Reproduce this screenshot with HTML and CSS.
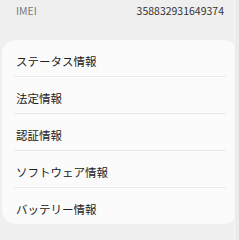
FILE: index.html
```html
<!DOCTYPE html>
<html lang="ja">
<head>
  <meta charset="UTF-8">
  <meta name="viewport" content="width=device-width, initial-scale=1.0">
  <title>端末情報</title>
  <link rel="stylesheet" href="styles.css">
</head>
<body>
  <div class="screen">
    <div class="info-row">
      <span class="info-label">IMEI</span>
      <span class="info-value">358832931649374</span>
    </div>

    <ul class="menu-card">
      <li>ステータス情報</li>
      <li>法定情報</li>
      <li>認証情報</li>
      <li>ソフトウェア情報</li>
      <li>バッテリー情報</li>
    </ul>
  </div>
  <div class="edge"></div>
</body>
</html>
```

FILE: styles.css
```css
:root {
  --page-bg: #efefef;
  --card-bg: #fbfbfb;
  --text-color: #222;
  --muted-color: #7a7a7a;
  --divider: #e9e9e9;
}

html, body {
  margin: 0;
  padding: 0;
  height: 100%;
}

body {
  background-color: var(--page-bg);
  font-family: "Noto Sans CJK JP", "Noto Sans", sans-serif;
  color: var(--text-color);
  position: relative;
  overflow: hidden;
}

.screen {
  padding: 1px 16px 0 2px;
}

.info-row {
  display: flex;
  justify-content: space-between;
  align-items: center;
  height: 18px;
  padding-left: 14px;
  font-size: 10.5px;
}

.info-label {
  color: var(--muted-color);
}

.info-value {
  color: #333;
}

.menu-card {
  list-style: none;
  margin: 21px -14px 0 0;
  padding: 0 12px;
  background-color: var(--card-bg);
  border-radius: 14px;
}

.menu-card li {
  height: 33px;
  padding: 3px 0 0 2px;
  line-height: 36px;
  font-size: 11.5px;
  border-bottom: 1px solid var(--divider);
}

.menu-card li:last-child {
  border-bottom: none;
}

.edge {
  position: absolute;
  top: 0;
  right: 0;
  bottom: 0;
  width: 4px;
  border-left: 1px solid #f6f6f6;
  border-right: 1px solid #d6d6d6;
  background-color: #ececec;
}
```
